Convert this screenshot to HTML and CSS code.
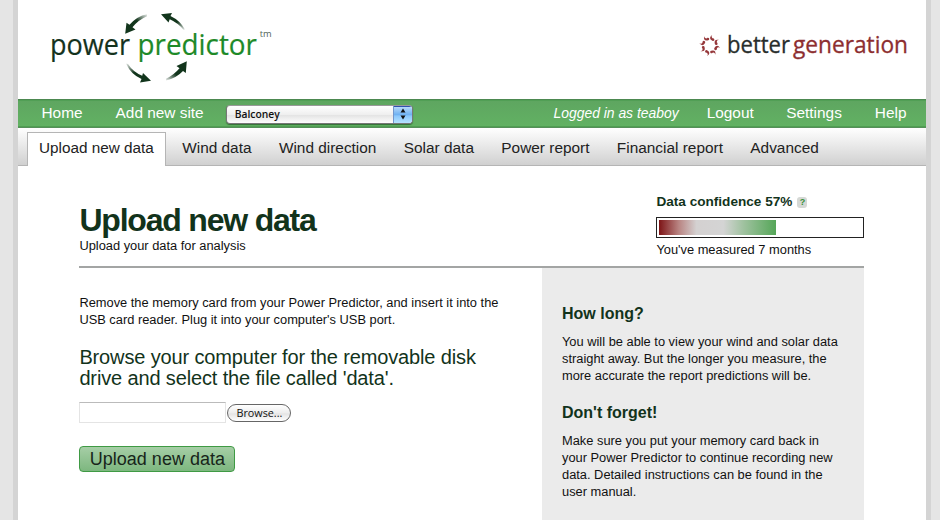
FILE: index.html
```html
<!DOCTYPE html>
<html lang="en">
<head>
<meta charset="utf-8">
<title>Power Predictor - Upload new data</title>
<link rel="stylesheet" href="styles.css">
</head>
<body>
<div class="page">
  <header class="header">
    <svg class="logo-pp" width="240" height="84" viewBox="40 6 240 84" role="img" aria-label="power predictor">
      <defs>
        <linearGradient id="a1" x1="1" y1="0" x2="0" y2="1"><stop offset="0" stop-color="#12351c" stop-opacity=".1"/><stop offset=".4" stop-color="#12351c"/></linearGradient>
        <linearGradient id="a2" x1="1" y1="1" x2="0" y2="0"><stop offset="0" stop-color="#12351c" stop-opacity=".1"/><stop offset=".4" stop-color="#12351c"/></linearGradient>
        <linearGradient id="a3" x1="0" y1="0" x2="1" y2="1"><stop offset="0" stop-color="#12351c" stop-opacity=".1"/><stop offset=".4" stop-color="#12351c"/></linearGradient>
        <linearGradient id="a4" x1="0" y1="1" x2="1" y2="0"><stop offset="0" stop-color="#12351c" stop-opacity=".1"/><stop offset=".4" stop-color="#12351c"/></linearGradient>
      </defs>
      <path fill="url(#a1)" d="M147 14.200Q137 16 129.500 24.800L126.500 22.800L125.200 33.700L135.500 29.500L132.500 27.300Q138 20 147 16.200Z"/>
      <path fill="url(#a2)" d="M185 29.500Q180 20.500 170.500 16L172 13L161 14.300L168.500 22.500L169.700 19.300Q178 23 183.500 29.800Z"/>
      <path fill="url(#a3)" d="M126 63.500Q131 74.500 141.500 79L140 82.500L151 80.800L143 73L142.200 75.700Q133 72 128 64Z"/>
      <path fill="url(#a4)" d="M166 80.500Q176.500 78 183 71L185.800 73L186.800 61.300L176.500 66L179.500 68.300Q174 75 166 78.700Z"/>
      <text class="pp-text dark" x="50" y="54.500" textLength="80" lengthAdjust="spacingAndGlyphs">power</text>
      <text class="pp-text green" x="137.500" y="54.500" textLength="119.500" lengthAdjust="spacingAndGlyphs">predictor</text>
      <text class="pp-tm" x="259.700" y="36.500">tm</text>
    </svg>
    <svg class="logo-bg" width="216" height="36" viewBox="696 28 216 36" role="img" aria-label="better generation">
      <defs><path id="ray" d="M-1.800 -10.600Q-2.300 -8.200 -.3 -7.700A1.400 1.400 0 1 1 .6 -5.300Q-4.600 -6 -1.800 -10.600Z"/></defs>
      <g fill="#96383b" transform="translate(709.700 45.500) rotate(-22)">
        <use href="#ray"/><use href="#ray" transform="rotate(45)"/><use href="#ray" transform="rotate(90)"/><use href="#ray" transform="rotate(135)"/><use href="#ray" transform="rotate(180)"/><use href="#ray" transform="rotate(225)"/><use href="#ray" transform="rotate(270)"/><use href="#ray" transform="rotate(315)"/>
      </g>
      <text class="bg-text black" x="727" y="53" textLength="63" lengthAdjust="spacingAndGlyphs">better</text>
      <text class="bg-text red" x="793" y="53" textLength="115" lengthAdjust="spacingAndGlyphs">generation</text>
    </svg>
  </header>

  <nav class="topbar">
    <a class="home">Home</a>
    <a class="add">Add new site</a>
    <div class="select"><span class="select-value">Balconey</span><span class="select-arrows"><svg width="8" height="14" viewBox="0 0 8 14"><path d="M1.500 5.500L4 1.500L6.500 5.500ZM1.500 8.500H6.500L4 12.500Z" fill="#111"/></svg></span></div>
    <em class="user">Logged in as teaboy</em>
    <a class="logout">Logout</a>
    <a class="settings">Settings</a>
    <a class="help">Help</a>
  </nav>

  <nav class="tabs">
    <a class="tab active">Upload new data</a>
    <a class="tab">Wind data</a>
    <a class="tab">Wind direction</a>
    <a class="tab">Solar data</a>
    <a class="tab">Power report</a>
    <a class="tab">Financial report</a>
    <a class="tab">Advanced</a>
  </nav>

  <main class="main">
    <div class="title-row">
      <div class="title">
        <h1>Upload new data</h1>
        <p>Upload your data for analysis</p>
      </div>
      <div class="confidence">
        <h2>Data confidence 57% <span class="hint">?</span></h2>
        <div class="meter"><div class="meter-fill" style="width:57.5%"></div></div>
        <p>You've measured 7 months</p>
      </div>
    </div>
    <div class="columns">
      <section class="upload">
        <p class="intro">Remove the memory card from your Power Predictor, and insert it into the<br>USB card reader. Plug it into your computer's USB port.</p>
        <h2>Browse your computer for the removable disk<br>drive and select the file called 'data'.</h2>
        <div class="file"><span class="file-name"></span><span class="browse">Browse...</span></div>
        <button class="submit">Upload new data</button>
      </section>
      <aside class="notes">
        <h3>How long?</h3>
        <p>You will be able to view your wind and solar data<br>straight away. But the longer you measure, the<br>more accurate the report predictions will be.</p>
        <h3>Don't forget!</h3>
        <p>Make sure you put your memory card back in<br>your Power Predictor to continue recording new<br>data. Detailed instructions can be found in the<br>user manual.</p>
      </aside>
    </div>
  </main>
</div>
</body>
</html>
```
FILE: styles.css
```css
* { box-sizing: border-box; }
body { margin: 0; background: #e5e5e5; font-family: "Liberation Sans", Arial, sans-serif; color: #111; height: 520px; overflow: hidden; }
h1, h2, h3, p { margin: 0; }
.page { width: 918px; height: 520px; margin-left: 13px; background: #fff; border: solid #d4d4d4; border-width: 0 5px; }
.header { height: 99px; display: flex; justify-content: space-between; align-items: flex-start; padding: 6px 14px 0 22px; }
.logo-bg { margin-top: 22px; }
.pp-text { font: 29px "Open Sans", sans-serif; stroke-width: .2px; }
.pp-tm { font: 9.3px "Open Sans", sans-serif; fill: #52665a; }
.bg-text { font: 23px "Open Sans", sans-serif; stroke-width: .3px; }
.dark { fill: #14321d; stroke: #14321d; }
.green { fill: #1e8a28; stroke: #1e8a28; }
.black { fill: #282d2b; stroke: #282d2b; }
.red { fill: #8d2e30; stroke: #8d2e30; }

.topbar { height: 29px; display: flex; align-items: center; padding: 0 19.500px 2px 23.500px; background: linear-gradient(#5ea560, #62b263); border-top: 1px solid #4c8850; border-bottom: 1px solid #568f5a; box-shadow: inset 0 1px #519f55, inset 0 -1px #4f9f52; color: #fff; font-size: 15.4px; white-space: nowrap; }
.add { margin-left: 33px; }
.select { width: 187px; height: 19px; margin: 3px auto 0 22px; display: flex; border-radius: 4px; overflow: hidden; background: linear-gradient(#fff, #efefef 50%, #e4e4e4 55%, #fdfdfd); border: 1px solid #777; border-top-color: #999; box-shadow: 0 1px 1px #356e37; }
.select-value { flex: 1; padding-left: 8px; color: #111; font: 600 10.3px/17px "Open Sans", sans-serif; }
.select-arrows { width: 19px; display: flex; justify-content: center; align-items: center; background: linear-gradient(#c0ddfa, #70b2f2 50%, #8cc8fc 60%, #b5e3ff); border-left: 1px solid #7296cb; box-shadow: inset 0 1px #3152ae; }
.user { font-size: 13.9px; padding-top: 1px; }
.logout { margin-left: 28px; }
.settings { margin-left: 32.500px; }
.help { margin-left: 33px; }

.tabs { height: 38px; display: flex; align-items: stretch; gap: 27.400px; padding: 4px 0 0 9px; font-size: 15.4px; color: #222; background: linear-gradient(#fff, #cfcfcf); box-shadow: inset 0 -1px #b5b5b5; white-space: nowrap; }
.tab { line-height: 32px; }
.tab.active { width: 139px; padding: 0 0 0 11px; margin-right: -11.200px; background: #fff; border: 1px solid #b5b5b5; border-bottom: 0; line-height: 30px; font-size: 15.3px; }

.main { width: 785px; margin-left: 61.400px; }
.title-row { height: 102px; display: flex; justify-content: space-between; border-bottom: 2px solid #a3a5a4; }
.title { padding-top: 36px; }
.title h1 { font-size: 32px; line-height: 36px; letter-spacing: -1.2px; color: #12331b; }
.title p { font-size: 12.85px; line-height: 15px; }
.confidence { width: 208px; padding-top: 27px; }
.confidence h2 { display: flex; align-items: center; gap: 5px; font-size: 13.6px; line-height: 18px; color: #12331b; white-space: nowrap; }
.hint { width: 10px; height: 11px; border-radius: 3px; background: #d5d8d5; color: #359038; font-size: 9px; line-height: 11px; text-align: center; }
.meter { height: 21px; margin-top: 6px; padding: 2px; border: 1px solid #222; }
.meter-fill { height: 15px; background: linear-gradient(90deg, #7d1416, #b98583 17%, #d4d1d1 32%, #d4d4d4 55%, #a0c2a0 72%, #55a658); }
.confidence p { margin-top: 4px; font-size: 12.85px; line-height: 15px; }

.columns { display: flex; height: 252px; }
.upload { width: 462.600px; padding-top: 26px; }
.intro { font-size: 12.85px; line-height: 17px; white-space: nowrap; }
.upload h2 { margin-top: 19px; font-size: 20px; line-height: 21px; font-weight: 400; letter-spacing: -.14px; color: #12331b; white-space: nowrap; }
.file { display: flex; align-items: center; gap: 1px; margin-top: 13px; height: 21px; }
.file-name { width: 147px; height: 21px; border: 1px solid #e4e4e4; border-top-color: #bbb; }
.browse { width: 64px; height: 18px; border: 1px solid #666; border-radius: 9px; background: linear-gradient(#fff, #ededed 50%, #e4e4e4 55%, #fff); font: 10.8px/16px "Open Sans", sans-serif; text-align: center; }
.submit { display: block; width: 156px; height: 26px; margin-top: 23px; padding: 0; border: 1px solid #3f9a44; border-radius: 4px; background: linear-gradient(#a6cea6, #7db77f); font: 18px/24px "Liberation Sans", sans-serif; color: #17251a; white-space: nowrap; }
.notes { width: 322.400px; padding: 35px 0 0 20px; background: #ebebeb; white-space: nowrap; }
.notes h3 { font-size: 16px; line-height: 22px; color: #12331b; }
.notes p { margin: 9px 0 18px; font-size: 12.85px; line-height: 16.8px; }
```
